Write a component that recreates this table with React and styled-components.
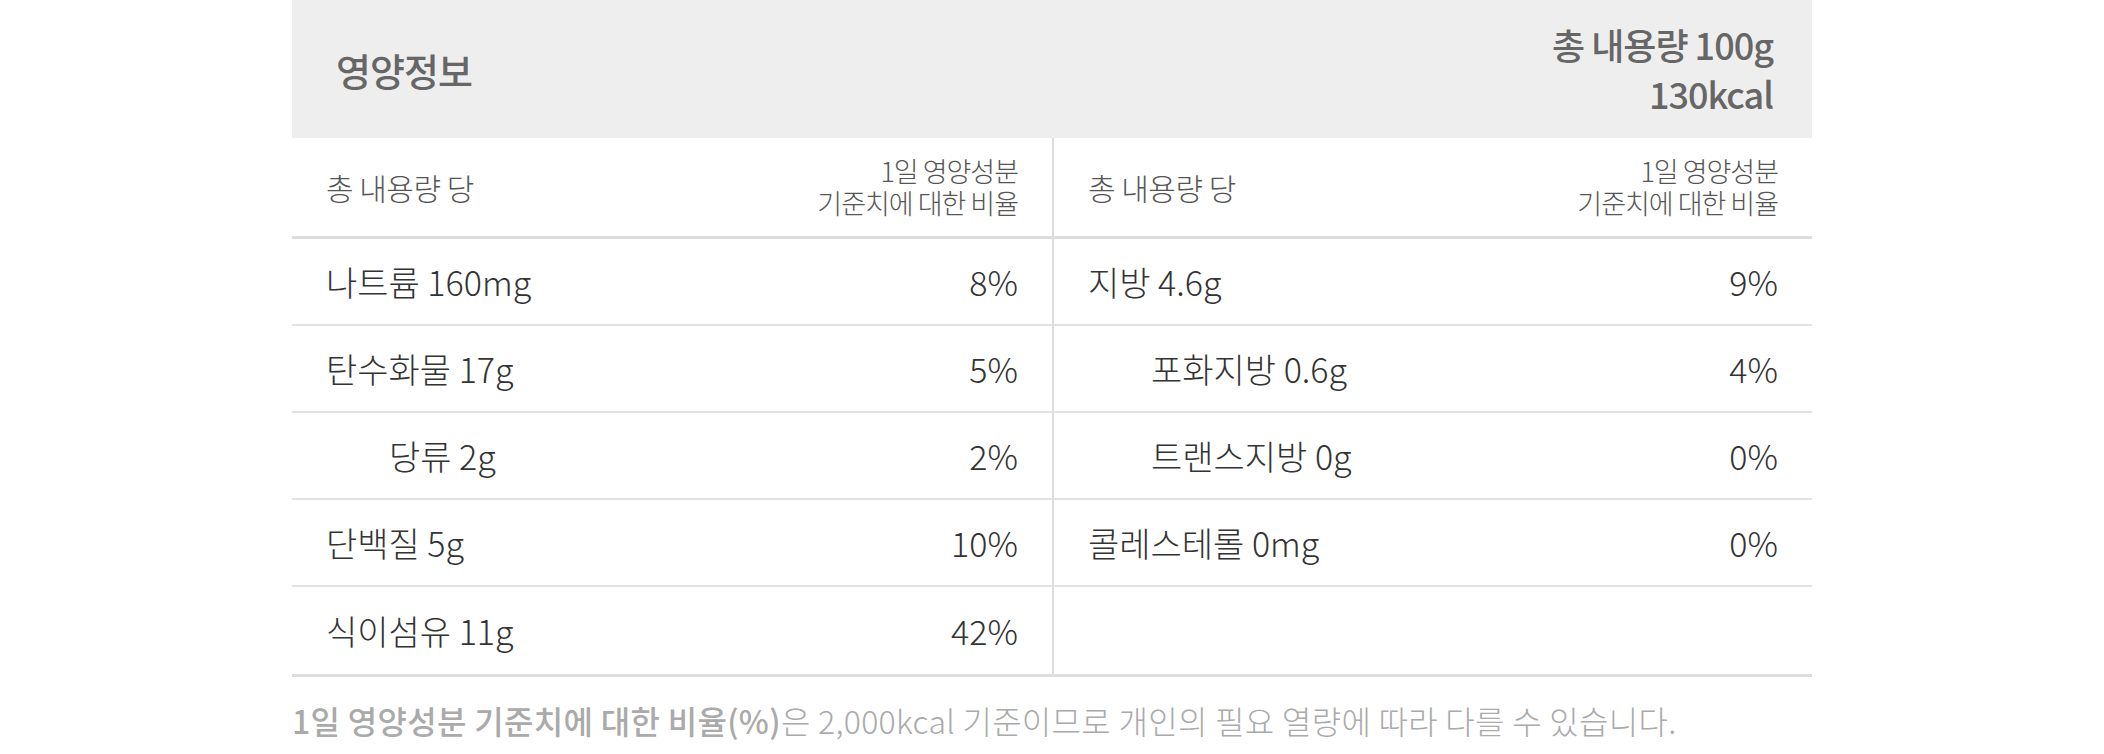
import React from 'react';
import styled, { createGlobalStyle } from 'styled-components';

const GlobalStyle = createGlobalStyle`
  body {
    margin: 0;
    background: #fff;
    font-family: "Noto Sans CJK KR", "Noto Sans", sans-serif;
  }
`;

const Page = styled.div`
  width: 1520px;
  margin: 0 auto;
`;

const Header = styled.div`
  display: flex;
  justify-content: space-between;
  align-items: center;
  height: 138px;
  padding: 0 39px 0 44px;
  box-sizing: border-box;
  background: #eee;
  color: #666;
  font-size: 36px;
  font-weight: 500;
  letter-spacing: -1px;
`;

const Title = styled.span`
  font-size: 38px;
`;

const Total = styled.div`
  text-align: right;
  line-height: 49px;
`;

const Body = styled.div`
  display: grid;
  grid-template-columns: 1fr 1fr;
  border-bottom: 3px solid #ddd;
`;

const Column = styled.div`
  display: flex;
  flex-direction: column;
  border-left: ${props => (props.divided ? '2px solid #ddd' : 'none')};
`;

const HeadRow = styled.div`
  display: flex;
  justify-content: space-between;
  align-items: center;
  height: 101px;
  padding: 0 34px;
  box-sizing: border-box;
  border-bottom: 3px solid #ddd;
  color: #555;
  font-weight: 300;
`;

const HeadLabel = styled.span`
  font-size: 30px;
  letter-spacing: -0.5px;
`;

const HeadNote = styled.span`
  font-size: 27px;
  line-height: 32px;
  letter-spacing: -1px;
  text-align: right;
`;

const Row = styled.div`
  display: flex;
  justify-content: space-between;
  align-items: center;
  height: 87px;
  padding: 0 34px 0 ${props => (props.indent ? '97px' : '34px')};
  box-sizing: border-box;
  border-bottom: ${props => (props.last ? 'none' : '2px solid #e2e2e2')};
  color: #333;
  font-size: 34px;
  font-weight: 300;
`;

const Note = styled.p`
  margin: 22px 0 0;
  color: #aaa;
  font-size: 32px;
  font-weight: 300;
  line-height: 42px;
  letter-spacing: 0.3px;

  strong {
    font-weight: 500;
  }
`;

const left = [
  { name: '나트륨 160mg', pct: '8%' },
  { name: '탄수화물 17g', pct: '5%' },
  { name: '당류 2g', pct: '2%', indent: true },
  { name: '단백질 5g', pct: '10%' },
  { name: '식이섬유 11g', pct: '42%' },
];

const right = [
  { name: '지방 4.6g', pct: '9%' },
  { name: '포화지방 0.6g', pct: '4%', indent: true },
  { name: '트랜스지방 0g', pct: '0%', indent: true },
  { name: '콜레스테롤 0mg', pct: '0%' },
  { name: '', pct: '' },
];

const NutrientColumn = ({ items, divided }) => (
  <Column divided={divided}>
    <HeadRow>
      <HeadLabel>총 내용량 당</HeadLabel>
      <HeadNote>
        1일 영양성분
        <br />
        기준치에 대한 비율
      </HeadNote>
    </HeadRow>
    {items.map((item, i) => (
      <Row key={i} indent={item.indent} last={i === items.length - 1}>
        <span>{item.name}</span>
        <span>{item.pct}</span>
      </Row>
    ))}
  </Column>
);

const App = () => (
  <Page>
    <GlobalStyle />
    <Header>
      <Title>영양정보</Title>
      <Total>
        총 내용량 100g
        <br />
        130kcal
      </Total>
    </Header>
    <Body>
      <NutrientColumn items={left} />
      <NutrientColumn items={right} divided />
    </Body>
    <Note>
      <strong>1일 영양성분 기준치에 대한 비율(%)</strong>은 2,000kcal 기준이므로 개인의 필요 열량에 따라 다를 수 있습니다.
    </Note>
  </Page>
);

export default App;
